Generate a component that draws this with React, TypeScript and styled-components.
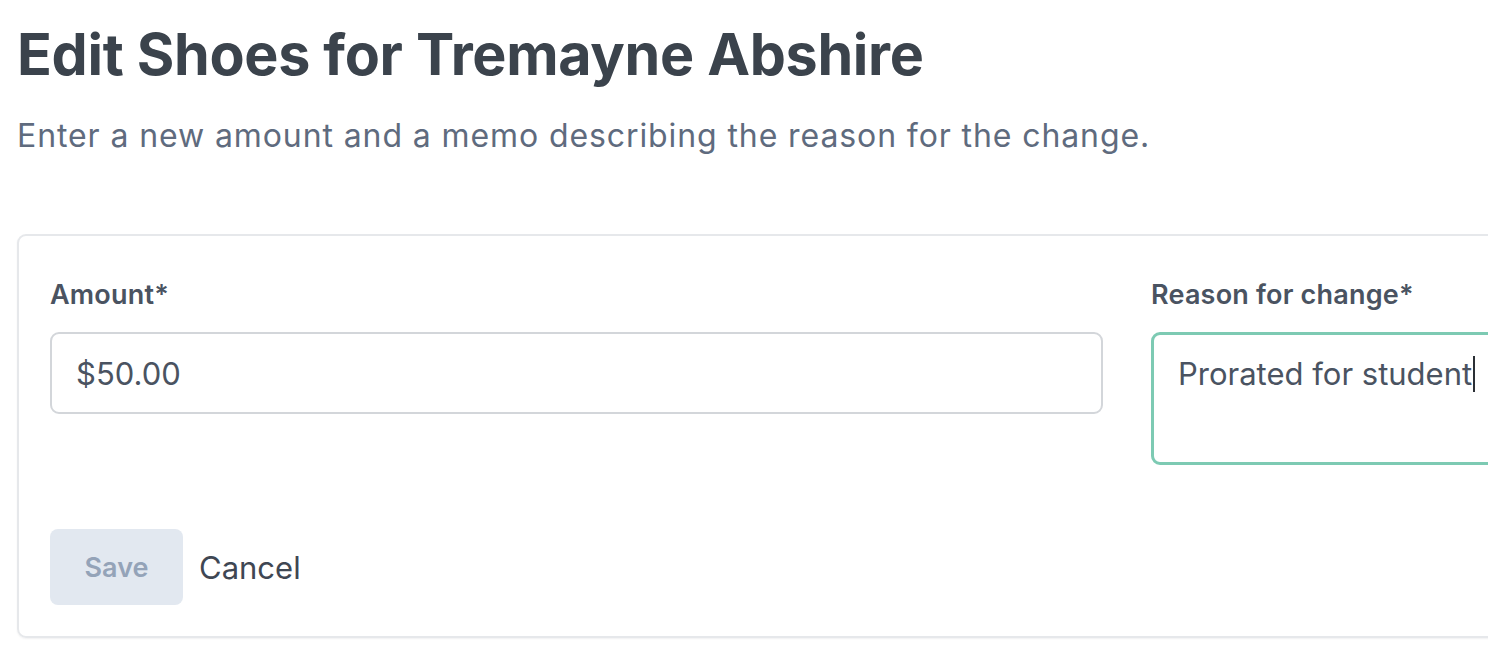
import styled, { createGlobalStyle } from "styled-components";

const GlobalStyle = createGlobalStyle`
  html, body {
    margin: 0;
    padding: 0;
    background: #ffffff;
    overflow: hidden;
  }
  body {
    font-family: Inter, "Noto Sans", "Liberation Sans", sans-serif;
    color: #3d444d;
  }
`;

const Page = styled.div`
  width: 1488px;
  height: 652px;
  padding: 18px 0 0 17px;
  box-sizing: border-box;
  overflow: hidden;
`;

const Title = styled.h1`
  margin: 0;
  font-size: 57.4px;
  line-height: 72px;
  font-weight: 700;
  letter-spacing: -0.3px;
  color: #3b434c;
  white-space: nowrap;
`;

const Subtitle = styled.p`
  margin: 24px 0 0 0;
  font-size: 32px;
  line-height: 44px;
  font-weight: 400;
  letter-spacing: 0.9px;
  color: #5f6b7e;
  white-space: nowrap;
`;

const Card = styled.form`
  margin-top: 76px;
  width: 2300px;
  padding: 42px 31px 31px 31px;
  box-sizing: border-box;
  border: 2px solid #e6e8eb;
  border-radius: 9px;
  box-shadow: 0 1px 2px rgba(16, 24, 40, 0.06);
`;

const Fields = styled.div`
  display: grid;
  grid-template-columns: 1053px 1053px;
  column-gap: 48px;
  align-items: start;
`;

const Field = styled.div`
  display: flex;
  flex-direction: column;
`;

const Label = styled.label`
  font-size: 27px;
  line-height: 34px;
  font-weight: 600;
  letter-spacing: 0.2px;
  color: #4a5361;
  margin-bottom: 20px;
`;

const Input = styled.div<{ $focused?: boolean; $tall?: boolean }>`
  box-sizing: border-box;
  height: ${(p) => (p.$tall ? "133px" : "82px")};
  padding: ${(p) => (p.$focused ? "20px 24px" : "21px 24px")};
  border: ${(p) => (p.$focused ? "3px solid #7dcab3" : "2px solid #d3d6da")};
  border-radius: 9px;
  font-size: 31px;
  line-height: 38px;
  color: #4a5361;
  white-space: nowrap;
`;

const Caret = styled.span`
  display: inline-block;
  width: 2px;
  height: 36px;
  margin-left: 1px;
  vertical-align: -7px;
  background: #2b2f35;
`;

const Actions = styled.div`
  display: flex;
  align-items: center;
  gap: 16px;
  margin-top: 64px;
`;

const SaveButton = styled.button`
  width: 133px;
  height: 76px;
  border: none;
  border-radius: 8px;
  background: #e2e8f0;
  color: #94a3b8;
  font-family: inherit;
  font-size: 27px;
  font-weight: 600;
  padding: 0;
`;

const CancelButton = styled.button`
  border: none;
  background: transparent;
  padding: 0;
  font-family: inherit;
  font-size: 31px;
  font-weight: 400;
  color: #3f4753;
`;

export default function App() {
  return (
    <>
      <GlobalStyle />
      <Page>
        <Title>Edit Shoes for Tremayne Abshire</Title>
        <Subtitle>Enter a new amount and a memo describing the reason for the change.</Subtitle>
        <Card onSubmit={(e) => e.preventDefault()}>
          <Fields>
            <Field>
              <Label>Amount*</Label>
              <Input>$50.00</Input>
            </Field>
            <Field>
              <Label>Reason for change*</Label>
              <Input $focused $tall>
                Prorated for student
                <Caret />
              </Input>
            </Field>
          </Fields>
          <Actions>
            <SaveButton type="button" disabled>
              Save
            </SaveButton>
            <CancelButton type="button">Cancel</CancelButton>
          </Actions>
        </Card>
      </Page>
    </>
  );
}
